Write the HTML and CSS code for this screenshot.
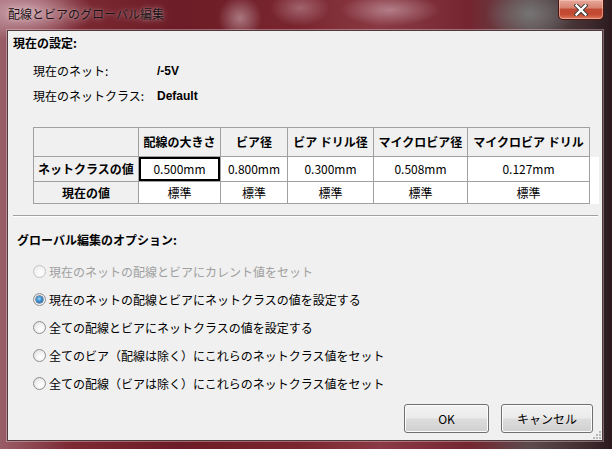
FILE: index.html
```html
<!DOCTYPE html>
<html lang="ja">
<head>
<meta charset="utf-8">
<title>配線とビアのグローバル編集</title>
<link rel="stylesheet" href="styles.css">
</head>
<body>
<div class="window">
  <div class="titlebar">
    <span class="title">配線とビアのグローバル編集</span>
    <div class="close">
      <svg width="14" height="12" viewBox="0 0 14 12">
        <path d="M2.5 1.5 L11.5 10.5 M11.5 1.5 L2.5 10.5" stroke="#3a3a3a" stroke-width="4.2" stroke-linecap="square"/>
        <path d="M2.5 1.5 L11.5 10.5 M11.5 1.5 L2.5 10.5" stroke="#ffffff" stroke-width="2.4" stroke-linecap="square"/>
      </svg>
    </div>
  </div>
  <div class="client">
    <div class="section-title">現在の設定:</div>
    <div class="info">
      <div class="info-row"><span class="info-label">現在のネット:</span><span class="info-value">/-5V</span></div>
      <div class="info-row"><span class="info-label">現在のネットクラス:</span><span class="info-value">Default</span></div>
    </div>
    <div class="grid-wrap">
      <div class="grid">
        <div class="cell head"></div>
        <div class="cell head">配線の大きさ</div>
        <div class="cell head">ビア径</div>
        <div class="cell head">ビア ドリル径</div>
        <div class="cell head">マイクロビア径</div>
        <div class="cell head">マイクロビア ドリル</div>

        <div class="cell label">ネットクラスの値</div>
        <div class="cell data selected">0.500mm</div>
        <div class="cell data">0.800mm</div>
        <div class="cell data">0.300mm</div>
        <div class="cell data">0.508mm</div>
        <div class="cell data">0.127mm</div>

        <div class="cell label">現在の値</div>
        <div class="cell data">標準</div>
        <div class="cell data">標準</div>
        <div class="cell data">標準</div>
        <div class="cell data">標準</div>
        <div class="cell data">標準</div>
      </div>
      <div class="grid-tail"></div>
    </div>
    <div class="separator"></div>
    <div class="options-title">グローバル編集のオプション:</div>
    <div class="options">
      <div class="option disabled"><span class="radio"></span><span>現在のネットの配線とビアにカレント値をセット</span></div>
      <div class="option"><span class="radio checked"></span><span>現在のネットの配線とビアにネットクラスの値を設定する</span></div>
      <div class="option"><span class="radio"></span><span>全ての配線とビアにネットクラスの値を設定する</span></div>
      <div class="option"><span class="radio"></span><span>全てのビア（配線は除く）にこれらのネットクラス値をセット</span></div>
      <div class="option"><span class="radio"></span><span>全ての配線（ビアは除く）にこれらのネットクラス値をセット</span></div>
    </div>
    <div class="buttons">
      <button class="btn btn-ok">OK</button>
      <button class="btn btn-cancel">キャンセル</button>
    </div>
    <svg class="grip" width="8" height="8" viewBox="0 0 8 8">
      <rect x="6" y="0" width="2" height="2" fill="#b8b8b8"/>
      <rect x="3" y="3" width="2" height="2" fill="#b8b8b8"/>
      <rect x="6" y="3" width="2" height="2" fill="#b8b8b8"/>
      <rect x="0" y="6" width="2" height="2" fill="#b8b8b8"/>
      <rect x="3" y="6" width="2" height="2" fill="#b8b8b8"/>
      <rect x="6" y="6" width="2" height="2" fill="#b8b8b8"/>
    </svg>
  </div>
</div>
</body>
</html>
```

FILE: styles.css
```css
html, body {
  margin: 0;
  padding: 0;
}

body {
  width: 612px;
  height: 449px;
  overflow: hidden;
  font-family: "Noto Sans CJK JP", "Noto Sans", sans-serif;
  font-size: 12px;
  color: #000;
}

.window {
  width: 612px;
  height: 449px;
  display: flex;
  flex-direction: column;
  box-sizing: border-box;
  background:
    radial-gradient(ellipse 70px 28px at 25px 12px, rgba(214, 176, 186, 0.85), rgba(214, 176, 186, 0) 100%),
    radial-gradient(ellipse 22px 22px at 240px 18px, rgba(235, 225, 230, 0.45), rgba(235, 225, 230, 0) 100%),
    radial-gradient(ellipse 30px 18px at 300px 8px, rgba(235, 215, 225, 0.35), rgba(235, 215, 225, 0) 100%),
    radial-gradient(ellipse 50px 16px at 390px 10px, rgba(230, 210, 220, 0.45), rgba(230, 210, 220, 0) 100%),
    radial-gradient(ellipse 45px 26px at 530px 14px, rgba(120, 120, 120, 0.9), rgba(120, 120, 120, 0) 100%),
    linear-gradient(90deg, #9a5e68 0px, #7c2a34 70px, #6c1c26 180px, #7a2630 300px, #8a3a44 380px, #742630 470px, #5c4c4e 530px, #3e2a2e 590px, #2a1a1e 612px);
}

.titlebar {
  height: 30px;
  display: flex;
  align-items: flex-start;
  flex-shrink: 0;
}

.title {
  margin: 6px 0 0 8px;
  line-height: 16px;
  color: #1a1214;
  text-shadow: 0 0 6px rgba(255, 235, 240, 0.55), 0 0 2px rgba(255, 235, 240, 0.4);
}

.close {
  margin-left: auto;
  margin-right: 8px;
  width: 46px;
  height: 20px;
  box-sizing: border-box;
  border: 1px solid #4a1610;
  border-top: none;
  border-radius: 0 0 5px 5px;
  background: linear-gradient(180deg, #e7a99a 0%, #d98472 40%, #c14a34 50%, #c24a30 75%, #de7a5c 100%);
  box-shadow: inset 0 0 0 1px rgba(255, 210, 200, 0.5);
  display: flex;
  align-items: center;
  justify-content: center;
}

.close svg {
  display: block;
}

.client {
  position: relative;
  flex: 1;
  margin: 0 9px 8px 7px;
  background: #f0f0f0;
  border: 1px solid #4c3a3c;
  box-shadow: 0 0 0 1px rgba(255, 225, 230, 0.35);
  display: flex;
  flex-direction: column;
}

.section-title {
  margin: 4px 0 0 5px;
  line-height: 16px;
  font-weight: bold;
}

.info {
  margin: 7px 0 0 25px;
}

.info-row {
  display: flex;
  height: 25px;
  align-items: center;
}

.info-label {
  width: 124px;
}

.info-value {
  font-family: "Liberation Sans", Arial, sans-serif;
  font-weight: bold;
}

.grid-wrap {
  margin: 19px 0 0 25px;
  display: flex;
  align-items: flex-start;
}

.grid {
  display: grid;
  grid-template-columns: 104px 81px 66px 85px 93px 121px;
  grid-template-rows: 28px 24px 21px;
  gap: 1px;
  padding: 1px;
  background: #a0a0a0;
}

.cell {
  display: flex;
  align-items: center;
  justify-content: center;
  white-space: nowrap;
  line-height: 16px;
}

.head, .label {
  background: #f0f0f0;
  font-weight: bold;
}

.data {
  background: #fff;
}

.selected {
  box-shadow: inset 0 0 0 2px #000;
}

.grid-tail {
  margin-top: 30px;
  width: 9px;
  height: 47px;
  background: #fff;
}

.separator {
  margin: 11px 4px 0 5px;
  height: 0;
  border-top: 1px solid #a0a0a0;
  border-bottom: 1px solid #ffffff;
}

.options-title {
  margin: 15px 0 0 9px;
  line-height: 16px;
  font-weight: bold;
}

.options {
  margin: 9px 0 0 25px;
  display: flex;
  flex-direction: column;
}

.option {
  height: 28px;
  display: flex;
  align-items: center;
  gap: 3px;
}

.option.disabled {
  color: #a0a0a0;
}

.radio {
  width: 13px;
  height: 13px;
  box-sizing: border-box;
  border-radius: 50%;
  border: 1px solid #8e8f8f;
  background: radial-gradient(circle at 60% 65%, #ffffff 0%, #f4f4f4 40%, #d8d8d8 100%);
  display: flex;
  align-items: center;
  justify-content: center;
  flex-shrink: 0;
}

.disabled .radio {
  border-color: #c4c4c4;
  background: radial-gradient(circle at 60% 65%, #ffffff 0%, #f4f4f4 50%, #e4e4e4 100%);
}

.radio.checked::after {
  content: "";
  width: 7px;
  height: 7px;
  border-radius: 50%;
  background: radial-gradient(circle at 45% 40%, #9cd3f4 0%, #3b8fd0 45%, #0c4a8a 100%);
  box-shadow: 0 0 0 0.5px #1b3c66;
}

.buttons {
  margin: 7px 9px 0 0;
  display: flex;
  justify-content: flex-end;
  gap: 12px;
}

.btn {
  height: 29px;
  box-sizing: border-box;
  border: 1px solid #707070;
  border-radius: 3px;
  background: linear-gradient(180deg, #f2f2f2 0%, #ebebeb 48%, #dddddd 52%, #cfcfcf 100%);
  box-shadow: inset 0 0 0 1px #fcfcfc;
  font-family: "Noto Sans CJK JP", "Noto Sans", sans-serif;
  font-size: 12px;
  color: #000;
  padding: 0;
  line-height: 16px;
}

.btn-ok {
  width: 85px;
}

.btn-cancel {
  width: 92px;
}

.grip {
  position: absolute;
  right: 1px;
  bottom: 1px;
}
```
